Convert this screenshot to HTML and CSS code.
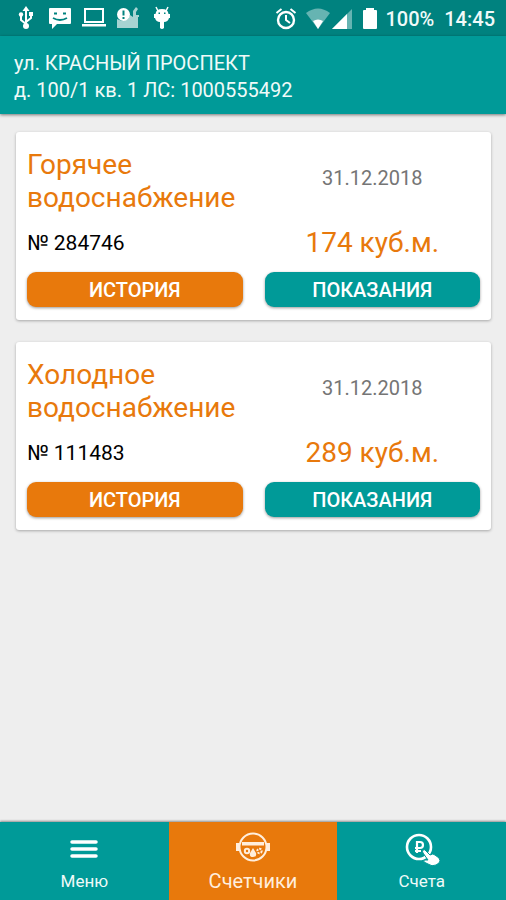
FILE: index.html
```html
<!DOCTYPE html>
<html lang="ru">
<head>
    <meta charset="UTF-8">
    <meta name="viewport" content="width=device-width, initial-scale=1.0">
    <title>Счетчики</title>
    <link rel="stylesheet" href="styles.css">
</head>
<body>
    <div class="status-bar">
        <div class="status-left">
            <!-- usb -->
            <svg viewBox="0 0 24 24"><path d="M12 4v14M12 18l-5-4v-5M12 16l5-4V8" fill="none" stroke="#fff" stroke-width="2"/><path d="M12 0l3.500 5h-7z"/><circle cx="7" cy="8.500" r="2.200"/><path d="M15 6h4v4h-4z"/><circle cx="12" cy="20" r="3"/></svg>
            <!-- message -->
            <svg viewBox="0 0 24 24"><path d="M2 2h20q1 0 1 1v14q0 1-1 1H9l-5 5v-5H2q-1 0-1-1V3q0-1 1-1z"/><path d="M6 6.500h3v2H6zM15 6.500h3v2h-3z" fill="#00827f"/><path d="M5 12q7 4 14 0" fill="none" stroke="#00827f" stroke-width="1.800"/></svg>
            <!-- laptop -->
            <svg viewBox="0 0 24 24"><path d="M3 3h18v13H3z" fill="none" stroke="#fff" stroke-width="2"/><path d="M0 18h24v2.500H0z"/></svg>
            <!-- warning -->
            <svg viewBox="0 0 24 24"><path opacity=".65" d="M1 13l5 2 6-2 2-4 3 2V5l3-4 2 2-2 3v3h3v2h-1v11H1z"/><circle cx="7.500" cy="8.500" r="6.500"/><path d="M7.500 4.500v5M7.500 11v2" stroke="#00827f" stroke-width="2"/></svg>
            <!-- android -->
            <svg viewBox="0 0 24 24"><path d="M6 1l2 4M18 1l-2 4" stroke="#fff" stroke-width="1.500"/><path d="M12 3q6 0 6.500 5H20v4h-1q-1 4-5 4v6q-2 2-4 0v-6q-4 0-5-4H4V8h1.500Q6 3 12 3z"/><path d="M8.500 6.500h1.500V8H8.500zM14 6.500h1.500V8H14z" fill="#00827f"/></svg>
        </div>
        <div class="status-right">
            <!-- alarm -->
            <svg viewBox="0 0 24 24"><circle cx="12" cy="13" r="8" fill="none" stroke="#fff" stroke-width="2.400"/><path d="M12 8v5l4 3M2.500 6l5-4M16.500 2l5 4" fill="none" stroke="#fff" stroke-width="2"/></svg>
            <!-- wifi -->
            <svg class="wifi" viewBox="0 0 24 24"><path opacity=".4" d="M0 6q12-9 24 0L12 22z"/><path d="M7 14q5-3 10 0l-5 8z"/></svg>
            <!-- signal -->
            <svg viewBox="0 0 24 24"><path opacity=".4" d="M22 2v20H2z"/><path d="M17 7v15H2z"/></svg>
            <!-- battery -->
            <svg class="battery" viewBox="0 0 24 24"><path d="M8 1h8v2h2q1 0 1 1v17q0 1-1 1H6q-1 0-1-1V4q0-1 1-1h2z"/></svg>
            <span>100%</span>
            <span class="clock">14:45</span>
        </div>
    </div>

    <header>
        <p>ул. КРАСНЫЙ ПРОСПЕКТ</p>
        <p>д. 100/1 кв. 1 ЛС: 1000555492</p>
    </header>

    <main>
        <section class="card">
            <h2>Горячее водоснабжение</h2>
            <p class="date">31.12.2018</p>
            <p class="number">№ 284746</p>
            <p class="value">174 куб.м.</p>
            <button type="button" class="history">ИСТОРИЯ</button>
            <button type="button">ПОКАЗАНИЯ</button>
        </section>

        <section class="card">
            <h2>Холодное водоснабжение</h2>
            <p class="date">31.12.2018</p>
            <p class="number">№ 111483</p>
            <p class="value">289 куб.м.</p>
            <button type="button" class="history">ИСТОРИЯ</button>
            <button type="button">ПОКАЗАНИЯ</button>
        </section>
    </main>

    <nav>
        <a href="#">
            <svg viewBox="0 0 36 36"><path d="M6 10h24M6 17h24M6 24h24" stroke="#fff" stroke-width="3.500" stroke-linecap="round"/></svg>
            <span>Меню</span>
        </a>
        <a href="#" class="active">
            <svg viewBox="0 0 36 36">
                <g fill="none" stroke="#ffeedd" stroke-width="2">
                    <circle cx="18" cy="15" r="13.500"/>
                    <circle cx="12" cy="19" r="2.200"/>
                    <circle cx="24.500" cy="19" r="2.200" stroke-dasharray="2 1"/>
                </g>
                <path d="M1 11h4v8H1zM31 11h4v8h-4zM7 10h22v3.500H7zM18 16l3 5q1 4-3 4t-3-4z" fill="#ffeedd"/>
            </svg>
            <span>Счетчики</span>
        </a>
        <a href="#">
            <svg viewBox="0 0 36 36">
                <circle cx="15" cy="15" r="12" fill="none" stroke="#fff" stroke-width="2.600"/>
                <path d="M13 21V10h3q3 0 3 3t-3 3h-5M11 19h6" fill="none" stroke="#fff" stroke-width="2.200"/>
                <path d="M19 18q2-1 3 1l4 4q3-2 5 0l4 3q2 3 0 5l-3 2q-4 2-8-1l-4-2q-1-2 1-2h3l-5-7q-1-2 0-3z" stroke="#009a98" stroke-width="1"/>
            </svg>
            <span>Счета</span>
        </a>
    </nav>
</body>
</html>
```
FILE: styles.css
```css
* {
    box-sizing: border-box;
}

body {
    font-family: Roboto, "Liberation Sans", sans-serif;
    font-size: 20px;
    margin: 0;
    min-height: 100vh;
    display: flex;
    flex-direction: column;
    background-color: #eeeeee;
}

p, h2 {
    margin: 0;
}

svg {
    fill: white;
}

.status-bar {
    display: flex;
    justify-content: space-between;
    height: 36px;
    padding: 0 11px 0 14px;
    background-color: #00827f;
    color: #f0faf9;
    font-weight: 500;
}

.status-bar svg {
    width: 24px;
    height: 24px;
}

.status-left, .status-right {
    display: flex;
    align-items: center;
}

.status-left {
    gap: 10px;
}

.status-right {
    padding-top: 2px;
}

.wifi {
    margin-left: 8px;
}

.battery {
    margin: 0 3px 0 4px;
}

.clock {
    margin-left: 10px;
}

header {
    padding: 14px 14px 10px;
    background-color: #009a98;
    color: #f0faf9;
    line-height: 27px;
    box-shadow: 0 1px 3px rgba(0, 0, 0, 0.5);
}

main {
    flex: 1;
    padding: 18px 15px 18px 16px;
}

.card {
    display: grid;
    grid-template-columns: 1fr 1fr;
    column-gap: 22px;
    align-items: center;
    margin-bottom: 22px;
    padding: 16px 11px 13px;
    background-color: white;
    border-radius: 3px;
    box-shadow: 0 1px 3px rgba(0, 0, 0, 0.3);
}

.card h2 {
    color: #e8790c;
    font-size: 28px;
    font-weight: 400;
    line-height: 33px;
}

.date {
    padding-bottom: 6px;
    color: #757575;
    text-align: center;
}

.number, .value {
    line-height: 58px;
}

.number {
    font-size: 21px;
}

.value {
    color: #e8790c;
    font-size: 28px;
    text-align: center;
}

.card button {
    height: 35px;
    padding: 0;
    border: none;
    border-radius: 9px;
    background-color: #009a98;
    color: white;
    font-family: inherit;
    font-size: 20px;
    font-weight: 500;
    box-shadow: 0 1px 3px rgba(0, 0, 0, 0.4);
    cursor: pointer;
}

.card .history {
    background-color: #e8790c;
}

nav {
    display: flex;
    box-shadow: 0 -1px 2px rgba(0, 0, 0, 0.4);
}

nav a {
    flex: 1;
    display: flex;
    flex-direction: column;
    align-items: center;
    height: 78px;
    padding-top: 10px;
    background-color: #009a98;
    color: #f0faf9;
    font-size: 17px;
    line-height: 26px;
    text-decoration: none;
}

nav svg {
    width: 36px;
    height: 36px;
}

nav .active {
    background-color: #e8790c;
    color: #ffeedd;
    font-size: 20px;
}
```
